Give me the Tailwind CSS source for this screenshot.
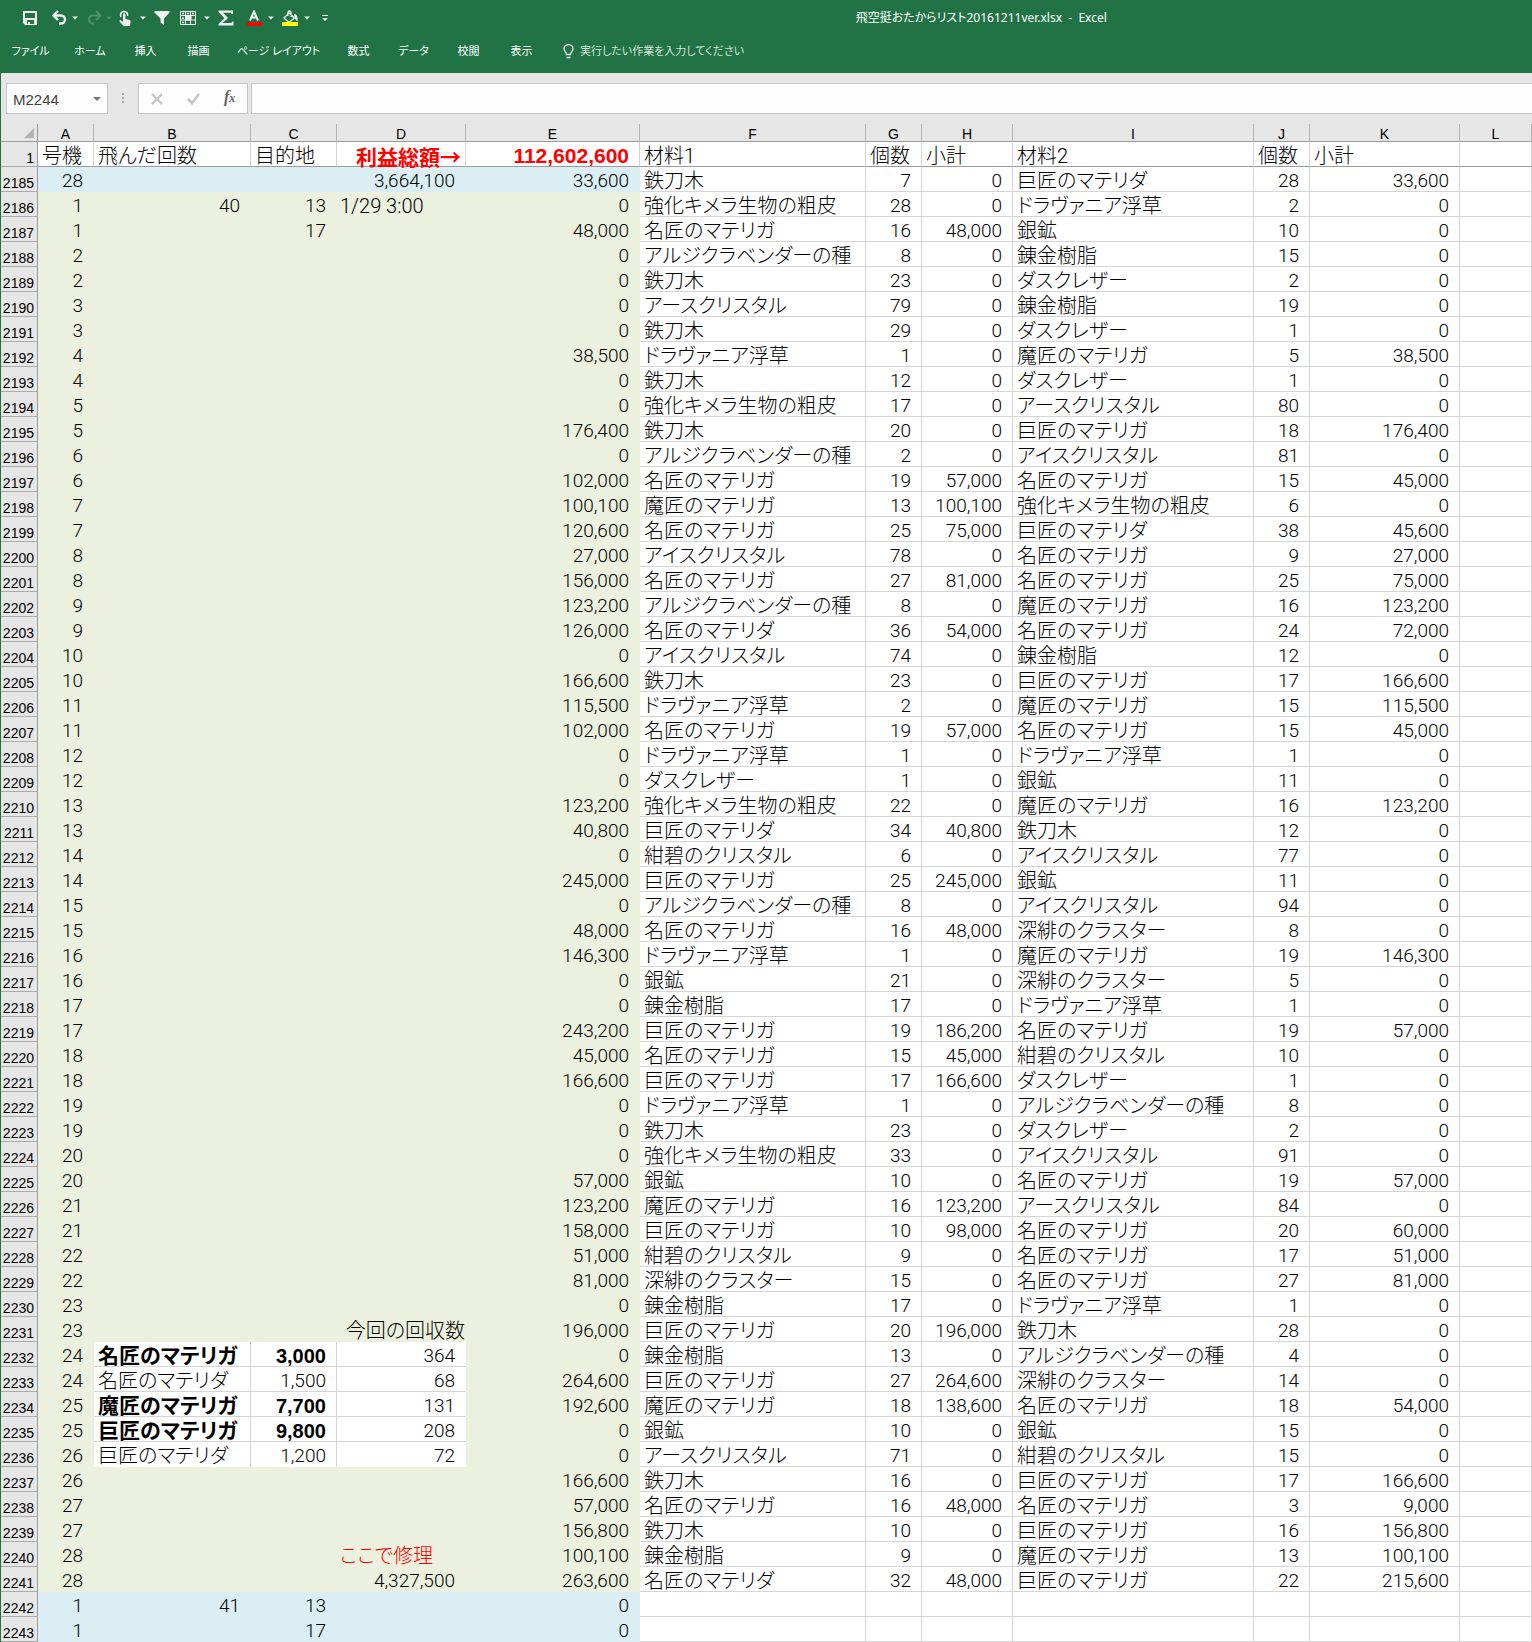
<!DOCTYPE html>
<html lang="ja">
<head>
<meta charset="utf-8">
<meta name="viewport" content="width=device-width, initial-scale=1">
<title>飛空挺おたからリスト20161211ver.xlsx - Excel</title>
<script src="https://cdn.jsdelivr.net/npm/@tailwindcss/browser@4"></script>
</head>
<body class="bg-white text-black">
<header class="flex h-[73px] flex-col bg-[#217346] font-['Noto_Sans','Noto_Sans_CJK_JP',sans-serif] text-xs text-white [font-feature-settings:'palt']">
  <div class="flex h-[35px] items-center">
    <div class="flex w-1/3 items-center pl-[22px]" role="toolbar" aria-label="クイック アクセス ツール バー">
      <button class="size-4" aria-label="上書き保存"><svg viewBox="0 0 16 16" class="size-4" fill="#f0f0f0"><path fill-rule="evenodd" d="M1 1h14v14H3l-2-2zM3 3v5h10V3zM5 10v4h1v-2h2v2h4v-4z"/></svg></button>
      <button class="ml-3.5 size-4" aria-label="元に戻す"><svg viewBox="0 0 16 16" class="size-4" fill="none" stroke="#f0f0f0" stroke-width="2.4"><path d="M1.5 5.5H9a4 4 0 0 1 0 8H7M6 1L1.5 5.5 6 10"/></svg></button>
      <button class="ml-1 w-1.5" aria-label="元に戻す一覧"><svg viewBox="0 0 6 4" class="h-1 w-1.5" fill="#f0f0f0"><path d="M0 .5h6L3 3.5z"/></svg></button>
      <button class="ml-2 size-4" aria-label="やり直し"><svg viewBox="0 0 16 16" class="size-4" fill="none" stroke="#4d8f6b" stroke-width="2.2"><path d="M14.5 5.5H7a4 4 0 0 0 0 8h1M10 1l4.5 4.5L10 10"/></svg></button>
      <button class="ml-1 w-1.5" aria-label="やり直し一覧"><svg viewBox="0 0 6 4" class="h-1 w-1.5" fill="#4d8f6b"><path d="M0 .5h6L3 3.5z"/></svg></button>
      <button class="ml-1.5 size-4" aria-label="タッチ/マウス モードの切り替え"><svg viewBox="0 0 16 16" class="size-4" fill="#f0f0f0"><path d="M5 4.5a1.2 1.2 0 0 1 2.4 0V9l4.2 1c.8.2 1 .7 1 1.4L12 16H5.5L1.500 11.500c-.5-.8.5-1.6 1.4-1L5 12z"/><path d="M3 7A3.600 3.600 0 1 1 9.500 6" fill="none" stroke="#f0f0f0" stroke-width="1.6"/></svg></button>
      <button class="ml-1.5 w-1.5" aria-label="タッチ一覧"><svg viewBox="0 0 6 4" class="h-1 w-1.5" fill="#f0f0f0"><path d="M0 .5h6L3 3.5z"/></svg></button>
      <button class="ml-2 size-4" aria-label="フィルター"><svg viewBox="0 0 16 16" class="size-4" fill="#f0f0f0"><path d="M.5 1h15v1.500L10 8.500V15L6.500 12.500v-4L.5 2.500z"/></svg></button>
      <button class="ml-2.5 size-4" aria-label="ウィンドウ枠の固定"><svg viewBox="0 0 16 16" class="size-4" fill="none" stroke="#f0f0f0"><path d="M.5 1.5h15v13H.5zM5.5 1.5v13M10.5 1.5v13M.5 5.5h15M.5 10h15"/><path d="M6 6h5v4H6z" fill="#f0f0f0"/><path d="M2 3.5h2M7 3.5h2M12 3.5h2M2 8h2M2 12.5h2" stroke-width="1.5"/></svg></button>
      <button class="ml-2 w-1.5" aria-label="固定一覧"><svg viewBox="0 0 6 4" class="h-1 w-1.5" fill="#f0f0f0"><path d="M0 .5h6L3 3.5z"/></svg></button>
      <button class="ml-2 size-4" aria-label="合計"><svg viewBox="0 0 16 16" class="size-4" fill="#f0f0f0"><path d="M.5.5H15V4h-1.300l-.7-1.300H5L10 8l-5.500 5H13.500L14.300 11.500H15.500V15.500H.5V14L6.500 8.200.5 2z"/></svg></button>
      <button class="ml-3 size-4" aria-label="フォントの色"><svg viewBox="0 0 16 16" class="size-4"><path d="M4 10.500L8 1.500l4 9M5.500 7.500h5" fill="none" stroke="#f0f0f0" stroke-width="2"/><path d="M1 12h15v4H1z" fill="#f00"/></svg></button>
      <button class="ml-1.5 w-1.5" aria-label="フォントの色一覧"><svg viewBox="0 0 6 4" class="h-1 w-1.5" fill="#f0f0f0"><path d="M0 .5h6L3 3.5z"/></svg></button>
      <button class="ml-2 size-4" aria-label="塗りつぶしの色"><svg viewBox="0 0 16 16" class="size-4"><path d="M7 3L2 8l5 4.500L12.500 8zM6 6V2.500a1.500 1.500 0 0 1 3 0V7" fill="none" stroke="#f0f0f0" stroke-width="1.3"/><path d="M12 4c2.500 0 4 2 3.500 7.500L13 9z" fill="#f0f0f0"/><path d="M0 12h16v4H0z" fill="#ff0"/></svg></button>
      <button class="ml-1.5 w-1.5" aria-label="塗りつぶしの色一覧"><svg viewBox="0 0 6 4" class="h-1 w-1.5" fill="#f0f0f0"><path d="M0 .5h6L3 3.5z"/></svg></button>
      <button class="ml-3 w-1.5" aria-label="ユーザー設定"><svg viewBox="0 0 6 8" class="h-2 w-1.5" fill="#f0f0f0"><path d="M0 1h6v1H0zM0 4h6L3 7z"/></svg></button>
    </div>
    <h1 class="ml-[345px] whitespace-pre">飛空挺おたからリスト20161211ver.xlsx  -  Excel</h1>
  </div>
  <nav class="flex h-8 items-center text-[11px] whitespace-nowrap">
    <button class="w-[61px]">ファイル</button>
    <button class="w-[58px]">ホーム</button>
    <button class="w-[53px]">挿入</button>
    <button class="w-[53px]">描画</button>
    <button class="w-[107px]">ページ レイアウト</button>
    <button class="w-[53px]">数式</button>
    <button class="w-[57px]">データ</button>
    <button class="w-[53px]">校閲</button>
    <button class="w-[53px]">表示</button>
    <button class="ml-[15px] flex items-center gap-1.5 text-[#d3e3da]"><svg viewBox="0 0 11 15" class="h-[15px] w-[11px]" fill="none" stroke="#f0f0f0" stroke-width="1.3"><path d="M3.500 10.500C3.500 8 1 7.500 1 4.800a4.500 4.200 0 0 1 9 0C10 7.500 7.500 8 7.500 10.500zM3.500 13.500h4"/></svg>実行したい作業を入力してください</button>
  </nav>
</header>

<main class="border-l border-[#217346] bg-[#e6e6e6]">
  <div class="flex h-[51px] items-start pt-2.5 pl-[5px]">
    <div class="flex h-[31px] w-[102px] items-center border border-[#c6c6c6] bg-[#fdfdfd]">
      <input aria-label="名前ボックス" value="M2244" class="w-[86px] pt-1 pl-1.5 font-['Liberation_Sans',sans-serif] text-[15px] text-[#444] outline-none">
      <button aria-label="名前一覧"><svg viewBox="0 0 8 4" class="h-1 w-2" fill="#777"><path d="M0 0h8L4 4z"/></svg></button>
    </div>
    <svg viewBox="0 0 3 12" class="mt-2.5 ml-3.5 h-3 w-[3px]" fill="#a6a6a6"><path d="M0 0h2v2H0zM0 4h2v2H0zM0 8h2v2H0z"/></svg>
    <div class="ml-[13px] flex h-[31px] w-[110px] items-center border border-[#c6c6c6] bg-[#fdfdfd] pl-3">
      <button aria-label="キャンセル"><svg viewBox="0 0 12 12" class="size-3" fill="none" stroke="#c4c4c4" stroke-width="2"><path d="M1 1l10 10M11 1L1 11"/></svg></button>
      <button aria-label="入力" class="ml-6"><svg viewBox="0 0 13 12" class="h-3 w-[13px]" fill="none" stroke="#c4c4c4" stroke-width="2.5"><path d="M1 6l4 4 7-9"/></svg></button>
      <button aria-label="関数の挿入" class="ml-6 pb-1 font-['Liberation_Serif',serif] text-base leading-5 font-bold text-[#666] italic">f<span class="text-xs">x</span></button>
    </div>
    <input aria-label="数式バー" class="ml-[3px] h-[31px] min-w-0 flex-1 border border-r-0 border-[#c6c6c6] bg-[#fdfdfd] px-2 outline-none">
  </div>

  <table class="w-full table-fixed border-separate border-spacing-0 font-['Roboto','Noto_Sans_CJK_JP',sans-serif] font-light whitespace-nowrap">
    <colgroup>
      <col class="w-[37px]"><col class="w-[56px]"><col class="w-[157px]"><col class="w-[86px]"><col class="w-[129px]"><col class="w-[174px]"><col class="w-[226px]"><col class="w-[56px]"><col class="w-[91px]"><col class="w-[241px]"><col class="w-[56px]"><col class="w-[150px]"><col>
    </colgroup>
    <thead id="head"></thead>
    <tbody id="rows" class="[font-feature-settings:'palt']"></tbody>
  </table>
</main>

<script>
const letters = ['A','B','C','D','E','F','G','H','I','J','K','L'];
const corner = '<td class="h-[18px] border-r border-b border-[#9b9b9b] p-0"><svg viewBox="0 0 10 10" class="ml-[23px] size-2.5" fill="#b4b4b4"><path d="M10 0v10H0z"/></svg></td>';
document.getElementById('head').innerHTML = '<tr>' + corner + letters.map(l =>
  `<th scope="col" class="h-[18px] border-r border-b border-r-[#b4b4b4] border-b-[#9b9b9b] p-0 pt-[3px] font-['Liberation_Sans',sans-serif] text-sm leading-[14px] font-normal">${l}</th>`).join('') + '</tr>';

// 材料1, 個数, 小計, 材料2, 個数, 小計 (2185行目から)
const data = `鉄刀木|7|0|巨匠のマテリダ|28|33600
強化キメラ生物の粗皮|28|0|ドラヴァニア浮草|2|0
名匠のマテリガ|16|48000|銀鉱|10|0
アルジクラベンダーの種|8|0|錬金樹脂|15|0
鉄刀木|23|0|ダスクレザー|2|0
アースクリスタル|79|0|錬金樹脂|19|0
鉄刀木|29|0|ダスクレザー|1|0
ドラヴァニア浮草|1|0|魔匠のマテリガ|5|38500
鉄刀木|12|0|ダスクレザー|1|0
強化キメラ生物の粗皮|17|0|アースクリスタル|80|0
鉄刀木|20|0|巨匠のマテリガ|18|176400
アルジクラベンダーの種|2|0|アイスクリスタル|81|0
名匠のマテリガ|19|57000|名匠のマテリガ|15|45000
魔匠のマテリガ|13|100100|強化キメラ生物の粗皮|6|0
名匠のマテリガ|25|75000|巨匠のマテリダ|38|45600
アイスクリスタル|78|0|名匠のマテリガ|9|27000
名匠のマテリガ|27|81000|名匠のマテリガ|25|75000
アルジクラベンダーの種|8|0|魔匠のマテリガ|16|123200
名匠のマテリダ|36|54000|名匠のマテリガ|24|72000
アイスクリスタル|74|0|錬金樹脂|12|0
鉄刀木|23|0|巨匠のマテリガ|17|166600
ドラヴァニア浮草|2|0|魔匠のマテリガ|15|115500
名匠のマテリガ|19|57000|名匠のマテリガ|15|45000
ドラヴァニア浮草|1|0|ドラヴァニア浮草|1|0
ダスクレザー|1|0|銀鉱|11|0
強化キメラ生物の粗皮|22|0|魔匠のマテリガ|16|123200
巨匠のマテリダ|34|40800|鉄刀木|12|0
紺碧のクリスタル|6|0|アイスクリスタル|77|0
巨匠のマテリガ|25|245000|銀鉱|11|0
アルジクラベンダーの種|8|0|アイスクリスタル|94|0
名匠のマテリガ|16|48000|深緋のクラスター|8|0
ドラヴァニア浮草|1|0|魔匠のマテリガ|19|146300
銀鉱|21|0|深緋のクラスター|5|0
錬金樹脂|17|0|ドラヴァニア浮草|1|0
巨匠のマテリガ|19|186200|名匠のマテリガ|19|57000
名匠のマテリガ|15|45000|紺碧のクリスタル|10|0
巨匠のマテリガ|17|166600|ダスクレザー|1|0
ドラヴァニア浮草|1|0|アルジクラベンダーの種|8|0
鉄刀木|23|0|ダスクレザー|2|0
強化キメラ生物の粗皮|33|0|アイスクリスタル|91|0
銀鉱|10|0|名匠のマテリガ|19|57000
魔匠のマテリガ|16|123200|アースクリスタル|84|0
巨匠のマテリガ|10|98000|名匠のマテリガ|20|60000
紺碧のクリスタル|9|0|名匠のマテリガ|17|51000
深緋のクラスター|15|0|名匠のマテリガ|27|81000
錬金樹脂|17|0|ドラヴァニア浮草|1|0
巨匠のマテリガ|20|196000|鉄刀木|28|0
錬金樹脂|13|0|アルジクラベンダーの種|4|0
巨匠のマテリガ|27|264600|深緋のクラスター|14|0
魔匠のマテリガ|18|138600|名匠のマテリガ|18|54000
銀鉱|10|0|銀鉱|15|0
アースクリスタル|71|0|紺碧のクリスタル|15|0
鉄刀木|16|0|巨匠のマテリガ|17|166600
名匠のマテリガ|16|48000|名匠のマテリガ|3|9000
鉄刀木|10|0|巨匠のマテリガ|16|156800
錬金樹脂|9|0|魔匠のマテリガ|13|100100
名匠のマテリダ|32|48000|巨匠のマテリガ|22|215600
|||||
|||||`.split('\n').map(r => r.split('|'));

// B, C, D 列に値のある行
const extra = {
  2185: ['', '', '3,664,100'], 2186: ['40', '13', '1/29 3:00'], 2187: ['', '17', ''],
  2231: ['', '', '今回の回収数'],
  2232: ['名匠のマテリガ', '3,000', '364'], 2233: ['名匠のマテリダ', '1,500', '68'],
  2234: ['魔匠のマテリガ', '7,700', '131'], 2235: ['巨匠のマテリガ', '9,800', '208'],
  2236: ['巨匠のマテリダ', '1,200', '72'],
  2240: ['', '', 'ここで修理'], 2241: ['', '', '4,327,500'],
  2242: ['41', '13', ''], 2243: ['', '17', '']
};
const GRID = 'bg-white border-[#d4d4d4]', GREEN = 'bg-[#ebf1de] border-[#ebf1de]', BLUE = 'bg-[#daeef3] border-[#daeef3]';
const NUM = 'text-right pr-2.5 text-[19px]', TXT = 'text-left pl-1 text-[20px]';
const NUM_BOLD = "text-right pr-2.5 text-[20px] font-bold font-['Liberation_Sans',sans-serif]", TXT_BOLD = 'text-left pl-1 text-[21px] font-bold';
const fmt = s => s === '' ? '' : Number(s).toLocaleString('en-US');
const cell = (v, cls) => `<td class="h-[25px] overflow-visible border-r border-b pt-1 pb-0 leading-5 ${cls}">${v}</td>`;
const rowHead = n => `<th scope="row" class="h-[25px] border-r border-b border-r-[#9b9b9b] border-b-[#ababab] bg-[#e6e6e6] p-0 pt-2 pr-[3px] text-right font-['Liberation_Sans',sans-serif] text-sm leading-4 font-normal">${n}</th>`;

const HEADROW = 'bg-white border-r-[#d4d4d4] border-b-[#9b9b9b]';
let html = '<tr>' + rowHead(1) + ['号機','飛んだ回数','目的地','利益総額→','112,602,600','材料1','個数','小計','材料2','個数','小計',''].map((v, i) =>
  cell(v, i === 3 ? `${HEADROW} pr-1 text-right font-['Noto_Sans_CJK_JP',sans-serif] text-[21px] font-bold text-[#f00]`
        : i === 4 ? `${HEADROW} pr-2.5 text-right font-['Liberation_Sans',sans-serif] text-[21px] font-bold text-[#f00]`
        : `${HEADROW} px-1 text-[20px]`)).join('') + '</tr>';

data.forEach((r, i) => {
  const n = 2185 + i, blue = n === 2185 || n > 2241, fill = blue ? BLUE : GREEN;
  const a = n === 2185 ? 28 : n > 2241 ? 1 : Math.floor((n - 2186) / 2) + 1;
  const boxed = n >= 2232 && n <= 2236, x = extra[n] || ['', '', ''];
  const bold = n === 2232 || n === 2234 || n === 2235;
  const edge = n === 2236 ? 'bg-white border-r-[#d4d4d4] border-b-white' : GRID;
  const lastEdge = n === 2236 ? 'bg-white border-white' : 'bg-white border-r-white border-b-[#d4d4d4]';
  let dCls = NUM;
  if (n === 2186) dCls = 'text-left pl-[3px] text-[20px]';
  if (n === 2231) dCls = 'text-right pr-0 text-[20px]';
  if (n === 2240) dCls = 'text-left pl-[3px] text-[20px] text-[#f00]';
  html += '<tr>' + rowHead(n) + cell(a, `${fill} ${NUM}`)
    + cell(x[0], boxed ? `${edge} ${bold ? TXT_BOLD : TXT}` : `${fill} ${NUM}`)
    + cell(x[1], boxed ? `${edge} ${bold ? NUM_BOLD : NUM}` : `${fill} ${NUM}`)
    + cell(x[2], `${boxed ? lastEdge : fill} ${dCls}`)
    + cell(r[0] ? fmt(String(Number(r[2]) + Number(r[5]))) : '0', `${fill} ${NUM}`)
    + cell(r[0], `${GRID} ${TXT}`) + cell(r[1], `${GRID} ${NUM}`) + cell(fmt(r[2]), `${GRID} ${NUM}`)
    + cell(r[3], `${GRID} ${TXT}`) + cell(r[4], `${GRID} ${NUM}`) + cell(fmt(r[5]), `${GRID} ${NUM}`)
    + cell('', GRID) + '</tr>';
});
document.getElementById('rows').innerHTML = html;
</script>
</body>
</html>
